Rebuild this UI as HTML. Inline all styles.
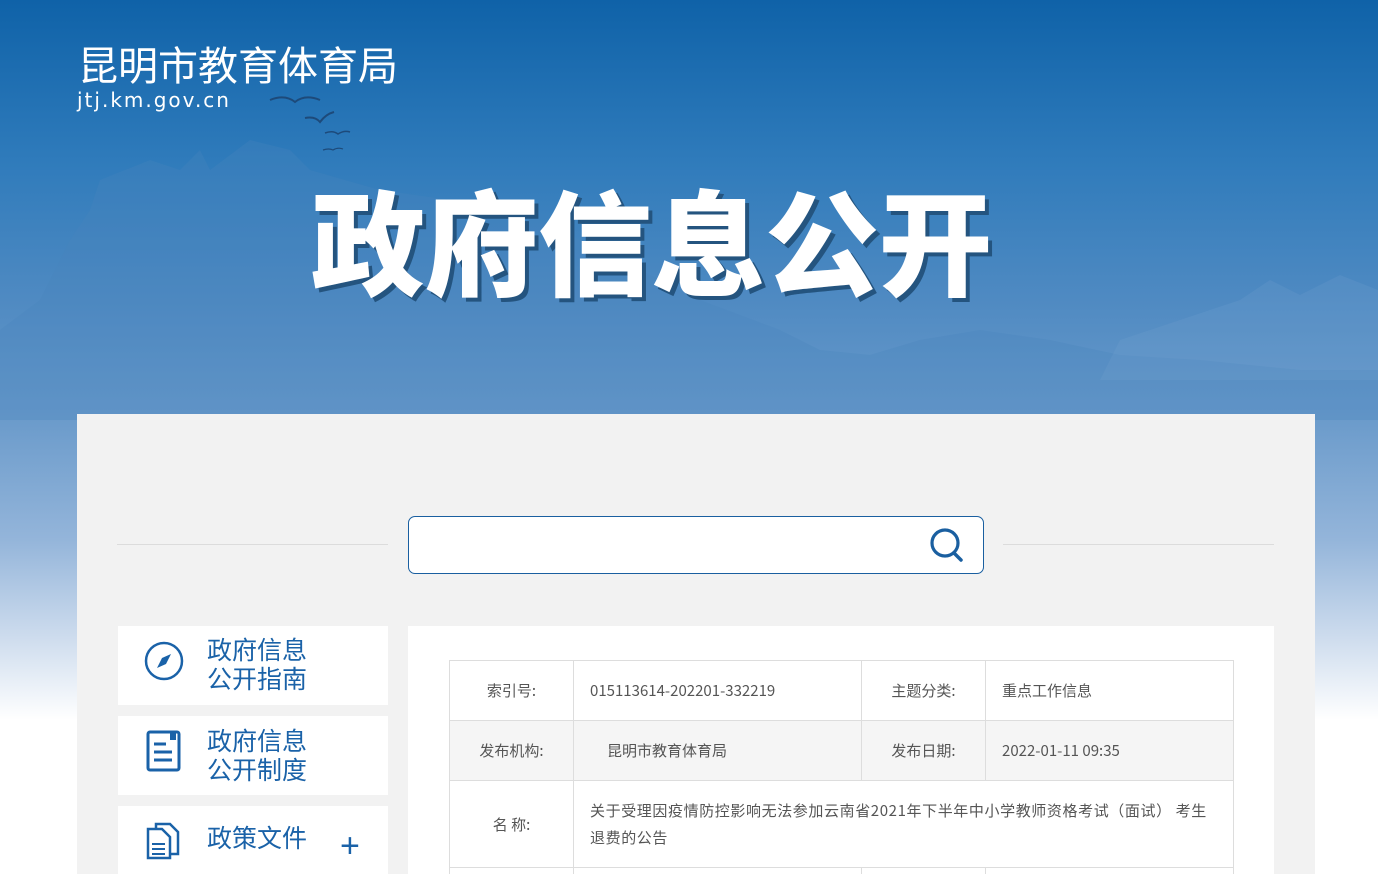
<!DOCTYPE html>
<html><head><meta charset="utf-8"><style>
*{margin:0;padding:0;box-sizing:border-box}
html{width:1378px;height:874px;overflow:hidden;background:#fff}
body{width:1378px;height:874px;overflow:hidden;position:relative;font-family:"Liberation Sans","Noto Sans CJK SC",sans-serif;
background:linear-gradient(180deg,#0f62a8 0px,#2f7bbb 160px,#4f8ac2 300px,#6b9bcb 420px,#94b5da 540px,#cfddee 640px,#ffffff 720px,#fff 874px)}
.mtn{position:absolute;left:0;top:0}
.logo{position:absolute;left:78px;top:38px;color:#fff;font-size:40px;line-height:50px;font-family:"Noto Sans CJK SC",sans-serif}
.url{position:absolute;left:77px;top:88px;color:#fff;font-size:20px;letter-spacing:2px;font-family:"DejaVu Sans","Liberation Sans",sans-serif}
.title{position:absolute;left:311px;top:163px;color:#fff;font-size:114px;font-weight:900;letter-spacing:-0.5px;line-height:150px;font-family:"Noto Sans CJK SC",sans-serif;text-shadow:4px 4px 0 #24547f}
.panel{position:absolute;left:77px;top:414px;width:1238px;height:460px;background:#f2f2f2}
.line{position:absolute;top:544px;height:1px;background:#dcdcdc;width:271px}
.search{position:absolute;left:408px;top:516px;width:576px;height:58px;background:#fff;border:1px solid #1a5fa0;border-radius:7px}
.card{position:absolute;left:118px;width:270px;height:79px;background:#fff}
.card .t{position:absolute;left:89px;color:#1a62a8;font-size:25px;line-height:29px;font-family:"Noto Sans CJK SC",sans-serif}
.card svg{position:absolute}
.main{position:absolute;left:408px;top:626px;width:866px;height:248px;background:#fff}
.tw{position:absolute;left:449px;top:660px;width:785px;height:214px;overflow:hidden}
table{border-collapse:collapse;font-size:15px;color:#555;font-family:"Noto Sans CJK SC",sans-serif}
td{border:1px solid #ddd;padding:0 16px;vertical-align:middle}
td.l{text-align:center;width:124px}
</style></head><body>
<svg class="mtn" width="1378" height="420" viewBox="0 0 1378 420">
<path d="M0 330 L40 300 L70 240 L90 210 L100 180 L150 160 L180 170 L200 150 L210 170 L250 140 L290 150 L310 170 L380 190 L450 200 L520 210 L580 240 L640 270 L700 300 L780 330 L820 350 L870 355 L920 340 L980 330 L1050 340 L1120 355 L1200 360 L1300 370 L1378 370 L1378 420 L0 420Z" fill="#4a86bd" opacity="0.3"/>
<path d="M1120 340 L1180 320 L1240 300 L1270 280 L1300 295 L1340 275 L1378 290 L1378 380 L1100 380Z" fill="#7aa6d2" opacity="0.2"/>
<path d="M270 100 q15 -6 25 2 q10 -8 25 -2" stroke="#1d4a7a" stroke-width="2" fill="none"/>
<path d="M305 118 q10 -2 15 4 q6 -8 14 -10" stroke="#1d4a7a" stroke-width="2" fill="none"/>
<path d="M325 133 q8 -3 13 1 q6 -4 12 -2" stroke="#1d4a7a" stroke-width="1.5" fill="none"/>
<path d="M323 150 q6 -2 10 0 q5 -3 10 -1" stroke="#1d4a7a" stroke-width="1.2" fill="none"/>
</svg>
<div class="logo">昆明市教育体育局</div>
<div class="url">jtj.km.gov.cn</div>
<div class="title">政府信息公开</div>
<div class="panel"></div>
<div class="line" style="left:117px"></div>
<div class="line" style="left:1003px"></div>
<div class="search"><svg style="position:absolute;left:518px;top:8px" width="40" height="40" viewBox="0 0 40 40"><circle cx="18" cy="18" r="13" stroke="#1a5fa0" stroke-width="3.2" fill="none"/><path d="M27 28 L34 35" stroke="#1a5fa0" stroke-width="3.5" stroke-linecap="round"/></svg></div>
<div class="card" style="top:626px">
<svg style="left:26px;top:15px" width="40" height="40" viewBox="0 0 40 40"><circle cx="20" cy="20" r="18" stroke="#1a62a8" stroke-width="2.5" fill="none"/><path d="M27 13 L22 23 L13 27 L18 17Z" fill="#1a62a8"/></svg>
<div class="t" style="top:9px">政府信息<br>公开指南</div></div>
<div class="card" style="top:716px">
<svg style="left:28px;top:14px" width="36" height="44" viewBox="0 0 36 44"><rect x="2" y="2" width="31" height="38" rx="2" stroke="#1a62a8" stroke-width="3" fill="none"/><path d="M8 14h12M8 22h18M8 30h18" stroke="#1a62a8" stroke-width="3"/><rect x="24" y="2" width="6" height="8" fill="#1a62a8"/></svg>
<div class="t" style="top:10px">政府信息<br>公开制度</div></div>
<div class="card" style="top:806px;height:68px">
<svg style="left:28px;top:16px" width="36" height="38" viewBox="0 0 36 38"><path d="M10 2h14l8 8v22h-22z" stroke="#1a62a8" stroke-width="2.5" fill="#fff"/><path d="M2 7h14l8 8v21h-22z" stroke="#1a62a8" stroke-width="2.5" fill="#fff"/><path d="M6 22h13M6 27h13M6 32h13" stroke="#1a62a8" stroke-width="2"/></svg>
<div class="t" style="top:17px">政策文件</div>
<div style="position:absolute;left:222px;top:20px;color:#1a62a8;font-size:34px;line-height:40px;font-weight:300">+</div></div>
<div class="main"></div>
<div class="tw"><table>
<tr style="height:60px"><td class="l">索引号:</td><td style="width:288px">015113614-202201-332219</td><td class="l">主题分类:</td><td style="width:248px">重点工作信息</td></tr>
<tr style="height:60px;background:#f5f5f5"><td class="l">发布机构:</td><td style="padding-left:33px">昆明市教育体育局</td><td class="l">发布日期:</td><td>2022-01-11 09:35</td></tr>
<tr style="height:87px"><td class="l">名 称:</td><td colspan="3" style="line-height:27px;letter-spacing:0.6px;padding-right:16px">关于受理因疫情防控影响无法参加云南省2021年下半年中小学教师资格考试（面试） 考生<br>退费的公告</td></tr>
<tr style="height:20px"><td></td><td></td><td></td><td></td></tr>
</table></div>
</body></html>
